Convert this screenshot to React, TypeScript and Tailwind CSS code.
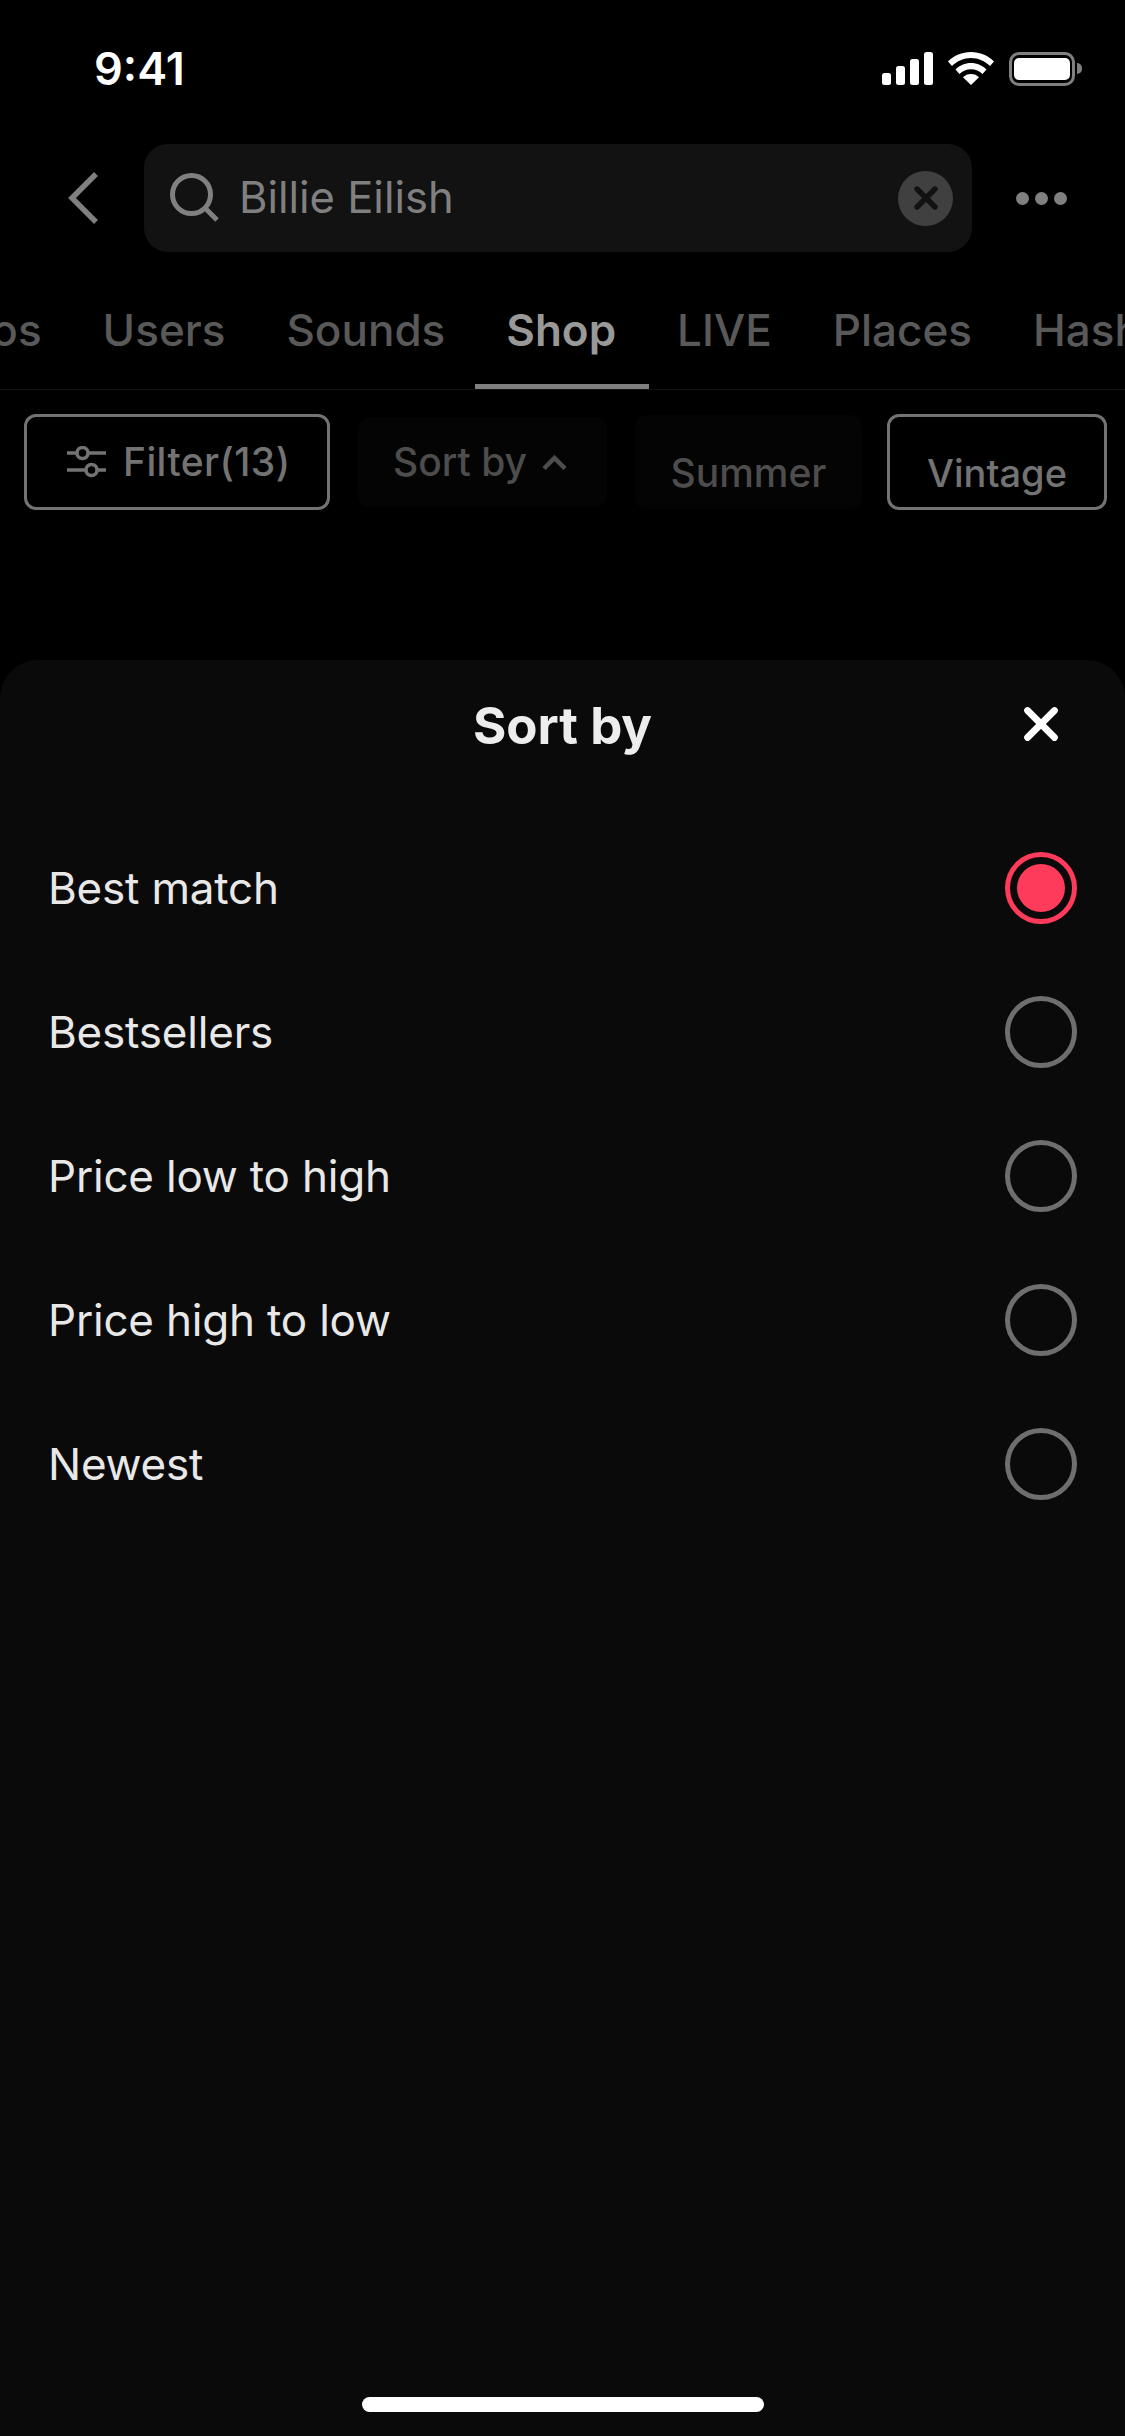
import { X } from 'lucide-react';

const FONT = "font-['Inter','Liberation_Sans',sans-serif]";

const tabs = [
  { label: 'Videos', active: false },
  { label: 'Users', active: false },
  { label: 'Sounds', active: false },
  { label: 'Shop', active: true },
  { label: 'LIVE', active: false },
  { label: 'Places', active: false },
  { label: 'Hashtags', active: false },
];

const options = ['Best match', 'Bestsellers', 'Price low to high', 'Price high to low', 'Newest'];

function StatusBar() {
  return (
    <div className="flex h-[136px] items-center justify-between pl-[94px] pr-[43px] pt-[1px]">
      <span className="text-[45px] font-semibold leading-none text-white">9:41</span>
      <div className="flex items-center gap-[15px]">
        <svg width="51" height="33" viewBox="0 0 51 33" fill="#fff">
          <rect x="0" y="21" width="9" height="12" rx="2.5" />
          <rect x="14" y="14" width="9" height="19" rx="2.5" />
          <rect x="28" y="7" width="9" height="26" rx="2.5" />
          <rect x="42" y="0" width="9" height="33" rx="2.5" />
        </svg>
        <svg width="46" height="33" viewBox="0 0 46 33" fill="#fff">
          <path d="M23 0C14 0 6 3.5 0 9.5l4 4.5C9 9 15.700 6 23 6s14 3 19 8l4-4.500C40 3.500 32 0 23 0z" />
          <path d="M23 11c-6 0-11.500 2.400-15.500 6.500l4 4.500c3-3 7-4.800 11.500-4.800s8.500 1.800 11.500 4.800l4-4.500C34.500 13.400 29 11 23 11z" />
          <path d="M23 22c-3.200 0-6 1.200-8 3.300L23 33l8-7.700c-2-2.100-4.800-3.300-8-3.300z" />
        </svg>
        <div className="flex items-center gap-[2px]">
          <div className="flex h-[34px] w-[66px] items-center justify-center rounded-[10px] border-[3px] border-[#808080]">
            <div className="h-[22px] w-[56px] rounded-[5px] bg-white" />
          </div>
          <div className="h-[11px] w-[5px] rounded-r-full bg-[#808080]" />
        </div>
      </div>
    </div>
  );
}

function SearchRow() {
  return (
    <div className="mt-[8px] flex h-[108px] items-center">
      <div className="w-[144px] pl-[68px]">
        <svg width="30" height="52" viewBox="0 0 30 52" fill="none" stroke="#808080" strokeWidth="5.500" strokeLinejoin="miter">
          <path d="M28 2 L4 26 L28 50" />
        </svg>
      </div>
      <div className="flex h-[108px] w-[828px] items-center rounded-[24px] bg-[#121212] pl-[26px] pr-[19px]">
        <svg width="50" height="50" viewBox="0 0 50 50" fill="none" stroke="#808080" strokeWidth="5" className="shrink-0">
          <circle cx="21.500" cy="21.500" r="19" />
          <path d="M35 35 L47 47" />
        </svg>
        <span className="ml-[19px] flex-1 text-[43.500px] leading-none text-[#808080]">Billie Eilish</span>
        <div className="flex h-[55px] w-[55px] items-center justify-center rounded-full bg-[#404040]">
          <X className="h-[36px] w-[36px] text-[#121212]" strokeWidth={3.6} />
        </div>
      </div>
      <div className="ml-[44px] flex gap-[6px]">
        <span className="h-[13px] w-[13px] rounded-full bg-[#808080]" />
        <span className="h-[13px] w-[13px] rounded-full bg-[#808080]" />
        <span className="h-[13px] w-[13px] rounded-full bg-[#808080]" />
      </div>
    </div>
  );
}

function Tabs() {
  return (
    <div className="mt-[32px] flex h-[106px] overflow-hidden border-b border-[#121212]">
      <div className="ml-[-104px] flex shrink-0 gap-[61px]">
        {tabs.map((t) => (
          <div key={t.label} className="relative flex h-[106px] items-center pb-[14px]">
            <span className={t.active ? 'text-[44px] font-semibold text-[#999999]' : 'text-[44px] font-medium text-[#595959]'}>{t.label}</span>
            {t.active && <div className="absolute -left-[31px] -right-[33px] bottom-0 h-[6px] bg-[#808080]" />}
          </div>
        ))}
      </div>
    </div>
  );
}

function Chips() {
  return (
    <div className="mt-[24px] flex items-center pl-[24px]">
      <div className="flex h-[96px] w-[306px] items-center gap-[16px] rounded-[12px] border-[3px] border-[#737373] pl-[40px]">
        <svg width="40" height="32" viewBox="0 0 40 32" fill="none" stroke="#737373" strokeWidth="3.500">
          <path d="M0 7H10M21 7H39" />
          <circle cx="15.500" cy="7" r="5.500" />
          <path d="M0 24H19M30 24H39" />
          <circle cx="24.500" cy="24" r="5.500" />
        </svg>
        <span className="text-[39px] font-medium tracking-[0.4px] text-[#737373]">Filter(13)</span>
      </div>
      <div className="ml-[28px] flex h-[90px] w-[249px] items-center gap-[15px] rounded-[12px] bg-[#040404] pl-[35px]">
        <span className="text-[39px] font-medium text-[#4d4d4d]">Sort by</span>
        <svg width="25" height="15" viewBox="0 0 25 15" fill="none" stroke="#4d4d4d" strokeWidth="4.500">
          <path d="M2 13.500 L12.500 3 L23 13.500" />
        </svg>
      </div>
      <div className="ml-[28px] flex h-[94px] w-[227px] items-end justify-center rounded-[12px] bg-[#040404] pb-[7px]">
        <span className="text-[39px] font-medium text-[#4d4d4d]">Summer</span>
      </div>
      <div className="ml-[25px] flex h-[96px] w-[220px] items-end justify-center rounded-[12px] border-[3px] border-[#737373] pb-[5px]">
        <span className="text-[38px] font-medium text-[#737373]">Vintage</span>
      </div>
    </div>
  );
}

function Radio({ checked }: { checked: boolean }) {
  if (checked) {
    return (
      <div className="flex h-[72px] w-[72px] items-center justify-center rounded-full border-[5px] border-[#ff3b5c]">
        <div className="h-[48px] w-[48px] rounded-full bg-[#ff3b5c]" />
      </div>
    );
  }
  return <div className="h-[72px] w-[72px] rounded-full border-[5px] border-[#6e6e6e]" />;
}

function SortSheet() {
  return (
    <div className="mt-[150px] flex-1 rounded-t-[38px] bg-[#0a0a0a]">
      <div className="relative flex h-[132px] items-center justify-center">
        <span className="text-[51px] font-bold text-[#ededed]">Sort by</span>
        <X className="absolute right-[57px] top-[37px] h-[54px] w-[54px] text-white" strokeWidth={3} />
      </div>
      <div className="mt-[24px] flex flex-col">
        {options.map((o, i) => (
          <div key={o} className="flex h-[144px] items-center justify-between pl-[48px] pr-[48px]">
            <span className="text-[44px] tracking-[-0.2px] text-[#e8e8e8]">{o}</span>
            <Radio checked={i === 0} />
          </div>
        ))}
      </div>
    </div>
  );
}

export default function App() {
  return (
    <div className={`${FONT} relative flex h-[2436px] w-[1125px] flex-col overflow-hidden bg-black`}>
      <StatusBar />
      <SearchRow />
      <Tabs />
      <Chips />
      <SortSheet />
      <div className="absolute bottom-[24px] left-[362px] h-[15px] w-[402px] rounded-full bg-white" />
    </div>
  );
}
